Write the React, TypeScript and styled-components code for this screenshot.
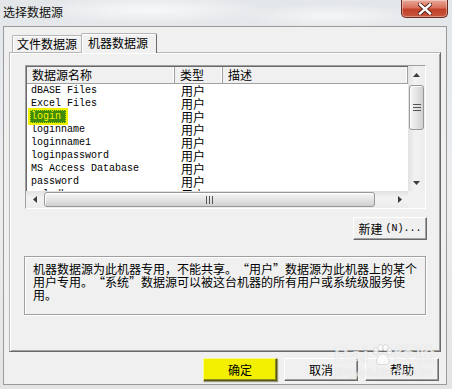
import React from 'react';
import styled, { createGlobalStyle } from 'styled-components';

const CJK = `"Noto Sans CJK SC", "Noto Sans", sans-serif`;
const MONO = `"Liberation Mono", "DejaVu Sans Mono", monospace`;

type Source = { name: string; kind: string; marked?: boolean };

const sources: Source[] = [
  { name: 'dBASE Files', kind: '用户' },
  { name: 'Excel Files', kind: '用户' },
  { name: 'login', kind: '用户', marked: true },
  { name: 'loginname', kind: '用户' },
  { name: 'loginname1', kind: '用户' },
  { name: 'loginpassword', kind: '用户' },
  { name: 'MS Access Database', kind: '用户' },
  { name: 'password', kind: '用户' },
  { name: 'sqlodbc', kind: '用户' },
];

const GlobalStyle = createGlobalStyle`
  html, body { margin: 0; padding: 0; background: #e9ebed; }
  body { font-family: ${CJK}; font-size: 12px; color: #000; }
`;

const Window = styled.div`
  position: relative;
  width: 452px;
  height: 389px;
  display: flex;
  flex-direction: column;
  overflow: hidden;
  background:
    radial-gradient(ellipse 120px 14px at 150px 10px, rgba(255,255,255,0.7), transparent),
    radial-gradient(ellipse 90px 12px at 330px 16px, rgba(255,255,255,0.6), transparent),
    linear-gradient(180deg, #e4e7ea 0%, #eceef0 50%, #e2e4e6 100%);
`;

const TitleBar = styled.div`
  height: 26px;
  flex: none;
  display: flex;
  justify-content: space-between;
  align-items: flex-start;
  padding: 0 4px 0 3px;
`;

const Title = styled.div`
  margin-top: 5px;
  font-size: 12px;
  line-height: 14px;
  color: #111;
`;

const CloseButton = styled.div`
  width: 47px;
  height: 18px;
  display: flex;
  align-items: center;
  justify-content: center;
  box-sizing: border-box;
  border: 1px solid #6d2a1f;
  border-top: none;
  border-radius: 0 0 5px 5px;
  background: linear-gradient(180deg, #e9a99a 0%, #d8705c 45%, #c2412a 55%, #c8553c 100%);
  box-shadow: inset 0 0 0 1px rgba(255,255,255,0.35);
`;

const Client = styled.div`
  flex: 1;
  margin: 0 5px 4px 3px;
  display: flex;
  flex-direction: column;
  padding: 6px 5px 3px 5px;
  background: #f0f0f0;
  border: 1px solid #9a9a9a;
`;

const TabStrip = styled.div`
  height: 19px;
  display: flex;
  align-items: flex-end;
  padding-left: 3px;
`;

const Tab = styled.div<{ $active?: boolean }>`
  position: relative;
  box-sizing: border-box;
  height: ${p => (p.$active ? 20 : 17)}px;
  width: ${p => (p.$active ? 76 : 70)}px;
  margin-left: ${p => (p.$active ? -1 : 0)}px;
  margin-bottom: ${p => (p.$active ? -1 : 0)}px;
  z-index: ${p => (p.$active ? 2 : 1)};
  padding: ${p => (p.$active ? '2px 0 0 6px' : '1px 0 0 4px')};
  background: #f0f0f0;
  border: 1px solid;
  border-color: #b5b5b5 #696969 transparent #b5b5b5;
  border-bottom: none;
  border-radius: 2px 2px 0 0;
  box-shadow: inset 1px 1px 0 #fff;
  font-size: 12px;
  line-height: 14px;
  white-space: nowrap;
`;

const Panel = styled.div`
  flex: 1;
  display: flex;
  flex-direction: column;
  padding: 12px 14px 0 15px;
  border: 1px solid;
  border-color: #b5b5b5 #696969 #696969 #b5b5b5;
  box-shadow: inset 1px 1px 0 #fff, inset -1px -1px 0 #a0a0a0;
`;

const ListView = styled.div`
  height: 144px;
  box-sizing: border-box;
  display: grid;
  grid-template-columns: 1fr 17px;
  grid-template-rows: 1fr 17px;
  border: 1px solid;
  border-color: #a0a0a0 #fff #fff #a0a0a0;
  box-shadow: inset 1px 1px 0 #696969;
  background: #fff;
`;

const ListContent = styled.div`
  overflow: hidden;
  padding: 1px 0 0 1px;
`;

const Columns = styled.div`
  display: grid;
  grid-template-columns: 148px 48px 1fr;
`;

const HeaderRow = styled(Columns)`
  height: 16px;
  background: #f0f0f0;
  border-bottom: 1px solid #a0a0a0;
`;

const HeaderCell = styled.div`
  padding-left: 5px;
  line-height: 16px;
  font-size: 12px;
  border-right: 1px solid #a0a0a0;
  box-shadow: inset -1px 0 0 #fff;
  white-space: nowrap;
`;

const Row = styled(Columns)`
  height: 13px;
`;

const NameCell = styled.div`
  padding-left: 4px;
  font-family: ${MONO};
  font-size: 10px;
  line-height: 13px;
  white-space: nowrap;
`;

const KindCell = styled.div`
  padding-left: 6px;
  font-size: 12px;
  line-height: 13px;
`;

const Marked = styled.span`
  display: inline-block;
  position: relative;
  margin: -2px 0 0 -3px;
  padding: 0 5px 0 1px;
  height: 13px;
  line-height: 13px;
  color: #f4f400;
  background: #3e8a0c;
  border: 2px solid #f0f000;
  outline: 1px dotted #b9d800;
  outline-offset: -3px;
`;

const ScrollBar = styled.div<{ $vertical?: boolean }>`
  display: flex;
  flex-direction: ${p => (p.$vertical ? 'column' : 'row')};
  background: ${p =>
    p.$vertical
      ? 'linear-gradient(90deg, #e2e2e2, #f2f2f2 40%, #ececec)'
      : 'linear-gradient(180deg, #e2e2e2, #f2f2f2 40%, #ececec)'};
`;

const Arrow = styled.div`
  width: 17px;
  height: 17px;
  flex: none;
  display: flex;
  align-items: center;
  justify-content: center;
`;

const Thumb = styled.div<{ $vertical?: boolean }>`
  box-sizing: border-box;
  display: flex;
  align-items: center;
  justify-content: center;
  border: 1px solid #979797;
  border-radius: 3px;
  background: ${p =>
    p.$vertical
      ? 'linear-gradient(90deg, #f5f5f5, #e4e4e4 50%, #cfcfcf)'
      : 'linear-gradient(180deg, #f5f5f5, #e4e4e4 50%, #cfcfcf)'};
  box-shadow: inset 1px 1px 0 #fff;
  ${p =>
    p.$vertical
      ? 'margin: 2px 1px 0 1px; height: 45px;'
      : 'margin: 1px 0 1px 1px; width: 331px;'}
`;

const Track = styled.div`
  flex: 1;
`;

const Corner = styled.div`
  background: #f0f0f0;
`;

const ButtonRow = styled.div<{ $gap?: number }>`
  display: flex;
  justify-content: flex-end;
  gap: ${p => p.$gap ?? 0}px;
`;

const Button = styled.div<{ $marked?: boolean }>`
  box-sizing: border-box;
  width: 74px;
  height: 23px;
  display: flex;
  align-items: center;
  justify-content: center;
  font-size: 12px;
  white-space: nowrap;
  background: ${p => (p.$marked ? '#f2f000' : '#f0f0f0')};
  border: 1px solid;
  border-color: ${p =>
    p.$marked ? '#fbfb8a #5c5a10 #5c5a10 #fbfb8a' : '#fff #696969 #696969 #fff'};
  box-shadow: ${p =>
    p.$marked
      ? 'inset -1px -1px 0 #8d8a1c, 1px 1px 1px rgba(60,60,0,0.5)'
      : 'inset -1px -1px 0 #a0a0a0'};
`;

const Mono = styled.span`
  font-family: ${MONO};
  font-size: 10px;
  margin-left: 3px;
`;

const NewRow = styled(ButtonRow)`
  margin-top: 8px;
  margin-right: -1px;
`;

const Description = styled.div`
  margin: 16px 0 0 -1px;
  height: 59px;
  box-sizing: border-box;
  padding: 5px 6px 0 8px;
  border: 1px solid #a0a0a0;
  box-shadow: inset 1px 1px 0 #fff, 1px 1px 0 #fff;
  font-size: 12px;
  line-height: 13px;
  white-space: nowrap;
`;

const Quote = styled.span<{ $close?: boolean }>`
  display: inline-block;
  width: 12px;
  text-align: ${p => (p.$close ? 'left' : 'right')};
`;

const DialogButtons = styled(ButtonRow)`
  margin: 6px 2px 0 0;
`;

const Watermark = styled.div`
  position: absolute;
  left: 334px;
  top: 344px;
  color: rgba(255, 255, 255, 0.7);
  text-shadow: 0 0 1px rgba(150, 150, 150, 0.35);
  font-family: "Liberation Sans", sans-serif;
  pointer-events: none;
`;

const WatermarkBrand = styled.div`
  display: flex;
  align-items: center;
  gap: 1px;
  font-size: 21px;
  font-weight: bold;
  line-height: 22px;
  letter-spacing: 1px;
`;

const WatermarkUrl = styled.div`
  font-size: 12px;
  line-height: 12px;
  margin-left: 1px;
`;

const TriangleIcon = ({ dir }: { dir: 'up' | 'down' | 'left' | 'right' }) => {
  const pts = {
    up: '0,4 7,4 3.5,0',
    down: '0,0 7,0 3.5,4',
    left: '4,0 4,7 0,3.5',
    right: '0,0 0,7 4,3.5',
  }[dir];
  const vertical = dir === 'up' || dir === 'down';
  return (
    <svg width={vertical ? 7 : 4} height={vertical ? 4 : 7}>
      <polygon points={pts} fill="#3c3c3c" />
    </svg>
  );
};

const Grip = ({ vertical }: { vertical?: boolean }) => (
  <svg width={vertical ? 8 : 7} height={vertical ? 7 : 8}>
    {[0, 3, 6].map(o =>
      vertical ? (
        <rect key={o} x={0} y={o} width={8} height={1} fill="#555" />
      ) : (
        <rect key={o} x={o} y={0} width={1} height={8} fill="#555" />
      ),
    )}
  </svg>
);

const PawIcon = () => (
  <svg width="22" height="22" viewBox="0 0 22 22">
    <g fill="rgba(255,255,255,0.75)" stroke="rgba(150,150,150,0.35)" strokeWidth="0.8">
      <ellipse cx="5" cy="7" rx="2.6" ry="3.4" />
      <ellipse cx="9.5" cy="3.8" rx="2.6" ry="3.2" />
      <ellipse cx="14.5" cy="3.8" rx="2.6" ry="3.2" />
      <ellipse cx="18.5" cy="7.5" rx="2.6" ry="3.4" />
      <path d="M5.5 18 C5.5 13 8.5 10 11.8 10 C15 10 18 13 18 18 C18 21 14 20.5 11.8 20.5 C9.5 20.5 5.5 21 5.5 18 Z" />
    </g>
  </svg>
);

const CloseGlyph = () => (
  <svg width="14" height="12" viewBox="0 0 14 12">
    <path d="M2 1.5 L12 10.5 M12 1.5 L2 10.5" stroke="#4a1a12" strokeWidth="4.2" strokeLinecap="square" />
    <path d="M2 1.5 L12 10.5 M12 1.5 L2 10.5" stroke="#fff" strokeWidth="2.4" strokeLinecap="square" />
  </svg>
);

const App = () => {
  return (
    <>
      <GlobalStyle />
      <Window>
        <TitleBar>
          <Title>选择数据源</Title>
          <CloseButton>
            <CloseGlyph />
          </CloseButton>
        </TitleBar>
        <Client>
          <TabStrip>
            <Tab>文件数据源</Tab>
            <Tab $active>机器数据源</Tab>
          </TabStrip>
          <Panel>
            <ListView>
              <ListContent>
                <HeaderRow>
                  <HeaderCell>数据源名称</HeaderCell>
                  <HeaderCell>类型</HeaderCell>
                  <HeaderCell>描述</HeaderCell>
                </HeaderRow>
                {sources.map(s => (
                  <Row key={s.name}>
                    <NameCell>{s.marked ? <Marked>{s.name}</Marked> : s.name}</NameCell>
                    <KindCell>{s.kind}</KindCell>
                    <div />
                  </Row>
                ))}
              </ListContent>
              <ScrollBar $vertical>
                <Arrow>
                  <TriangleIcon dir="up" />
                </Arrow>
                <Thumb $vertical>
                  <Grip vertical />
                </Thumb>
                <Track />
                <Arrow>
                  <TriangleIcon dir="down" />
                </Arrow>
              </ScrollBar>
              <ScrollBar>
                <Arrow>
                  <TriangleIcon dir="left" />
                </Arrow>
                <Thumb>
                  <Grip />
                </Thumb>
                <Track />
                <Arrow>
                  <TriangleIcon dir="right" />
                </Arrow>
              </ScrollBar>
              <Corner />
            </ListView>
            <NewRow>
              <Button>
                新建<Mono>(N)...</Mono>
              </Button>
            </NewRow>
            <Description>
              机器数据源为此机器专用，不能共享。<Quote>“</Quote>用户<Quote $close>”</Quote>
              数据源为此机器上的某个
              <br />
              用户专用。<Quote>“</Quote>系统<Quote $close>”</Quote>
              数据源可以被这台机器的所有用户或系统级服务使
              <br />
              用。
            </Description>
          </Panel>
          <DialogButtons $gap={7}>
            <Button $marked>确定</Button>
            <Button>取消</Button>
            <Button>帮助</Button>
          </DialogButtons>
        </Client>
        <Watermark>
          <WatermarkBrand>
            Bai
            <PawIcon />
            经验
          </WatermarkBrand>
          <WatermarkUrl>jingyan.baidu.com</WatermarkUrl>
        </Watermark>
      </Window>
    </>
  );
};

export default App;
